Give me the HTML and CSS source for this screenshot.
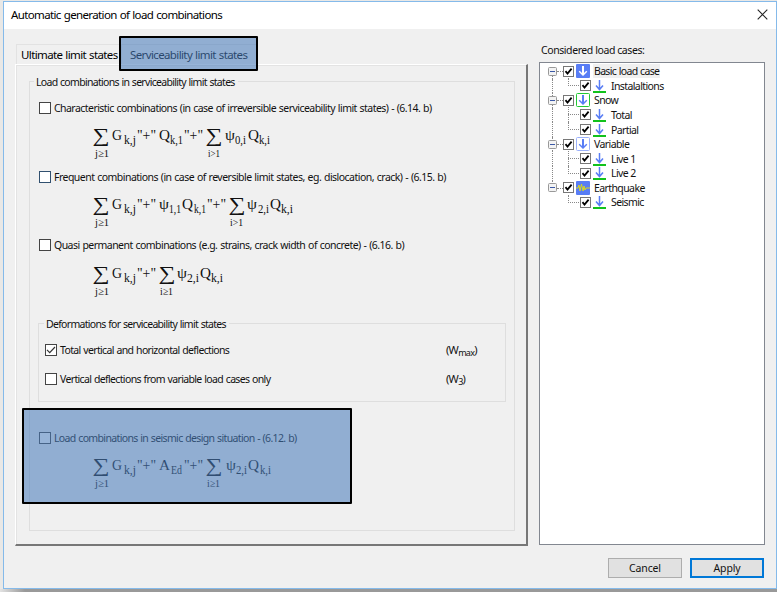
FILE: index.html
```html
<!DOCTYPE html>
<html lang="en">
<head>
<meta charset="utf-8">
<title>Automatic generation of load combinations</title>
<link rel="stylesheet" href="styles.css">
</head>
<body>
<svg class="defs" width="0" height="0" aria-hidden="true">
  <symbol id="check" viewBox="0 0 11 11"><rect x=".5" y=".5" width="10" height="10" fill="#fff" stroke="#777"/><path d="M2.5 5.2 4.5 7.6 8.6 2.7" fill="none" stroke="#000" stroke-width="1.8"/></symbol>
  <symbol id="minus" viewBox="0 0 9 9"><rect x=".5" y=".5" width="8" height="8" rx="1" fill="#f3f3f3" stroke="#999"/><path d="M2 4.5h5" stroke="#3c59a6"/></symbol>
  <symbol id="load" viewBox="0 0 13 14"><path d="M6.5 1v9M3 6.5l3.5 4 3.5-4" fill="none" stroke="#587df5" stroke-width="1.5"/><path d="M0 13h13" stroke="#12c21c" stroke-width="2"/></symbol>
  <symbol id="arrow" viewBox="0 0 14 14"><path d="M6 2h2v7l2.300-2.300 1 1L7 12 2.700 7.700l1-1L6 9z"/></symbol>
</svg>
<main class="window">
  <header class="titlebar"><span class="title">Automatic generation of load combinations</span>
    <svg class="close" width="11" height="11" viewBox="0 0 11 11"><path d="M.7.7l9.6 9.6M10.3.7.7 10.3" stroke="#222" stroke-width="1.1"/></svg>
  </header>
  <div class="content">
    <section class="left">
      <nav class="tabs">
        <span class="tab tab-ultimate">Ultimate limit states</span>
        <span class="tab tab-service">Serviceability limit states<i class="highlight tab-highlight"></i></span>
      </nav>
      <div class="panel">
        <div class="group main-group">
          <span class="legend legend-main">Load combinations in serviceability limit states</span>
          <div class="combination first">
            <label class="option"><i class="box"></i><span class="t1">Characteristic combinations (in case of irreversible serviceability limit states) - (6.14. b)</span></label>
            <svg class="formula" data-formula="characteristic" width="220" height="36"></svg>
          </div>
          <div class="combination second">
            <label class="option"><i class="box blue"></i><span class="t2">Frequent combinations (in case of reversible limit states, eg. dislocation, crack) - (6.15. b)</span></label>
            <svg class="formula" data-formula="frequent" width="220" height="36"></svg>
          </div>
          <div class="combination third">
            <label class="option"><i class="box"></i><span class="t3">Quasi permanent combinations (e.g. strains, crack width of concrete) - (6.16. b)</span></label>
            <svg class="formula" data-formula="quasi" width="220" height="36"></svg>
          </div>
          <div class="group inner-group">
            <span class="legend legend-inner">Deformations for serviceability limit states</span>
            <div class="deflection"><label class="option"><i class="box"><svg width="10" height="10"><path d="M1 4.800 3.700 7.600 9 2" fill="none" stroke="#333" stroke-width="1.2"/></svg></i><span class="t4">Total vertical and horizontal deflections</span></label><span class="symbol wmax">(W<sub>max</sub>)</span></div>
            <div class="deflection"><label class="option"><i class="box"></i><span class="t4">Vertical deflections from variable load cases only</span></label><span class="symbol">(W<sub>3</sub>)</span></div>
          </div>
          <div class="combination seismic">
            <label class="option"><i class="box"></i><span class="t4">Load combinations in seismic design situation - (6.12. b)</span></label>
            <svg class="formula" data-formula="seismic" width="220" height="36"></svg>
            <i class="highlight seismic-highlight"></i>
          </div>
        </div>
      </div>
    </section>
    <aside class="right">
      <span class="heading">Considered load cases:</span>
      <div class="tree">
        <div class="row parent top"><svg class="expand"><use href="#minus"/></svg><svg class="check"><use href="#check"/></svg><svg class="kind"><rect width="14" height="14" rx="1" fill="#587df5"/><use href="#arrow" fill="#fff"/></svg><span class="label selected">Basic load case</span></div>
        <div class="row child last"><i class="branch"></i><svg class="check"><use href="#check"/></svg><svg class="load"><use href="#load"/></svg><span class="label">Instalaltions</span></div>
        <div class="row parent"><svg class="expand"><use href="#minus"/></svg><svg class="check"><use href="#check"/></svg><svg class="kind"><rect x=".5" y=".5" width="13" height="13" rx="1" fill="#fff" stroke="#23c934"/><use href="#arrow" fill="#587df5"/></svg><span class="label">Snow</span></div>
        <div class="row child"><i class="branch"></i><svg class="check"><use href="#check"/></svg><svg class="load"><use href="#load"/></svg><span class="label">Total</span></div>
        <div class="row child last"><i class="branch"></i><svg class="check"><use href="#check"/></svg><svg class="load"><use href="#load"/></svg><span class="label">Partial</span></div>
        <div class="row parent"><svg class="expand"><use href="#minus"/></svg><svg class="check"><use href="#check"/></svg><svg class="kind"><rect x=".5" y=".5" width="13" height="13" rx="1" fill="#fff" stroke="#9bb1fa"/><use href="#arrow" fill="#587df5"/></svg><span class="label">Variable</span></div>
        <div class="row child"><i class="branch"></i><svg class="check"><use href="#check"/></svg><svg class="load"><use href="#load"/></svg><span class="label">Live 1</span></div>
        <div class="row child last"><i class="branch"></i><svg class="check"><use href="#check"/></svg><svg class="load"><use href="#load"/></svg><span class="label">Live 2</span></div>
        <div class="row parent bottom"><svg class="expand"><use href="#minus"/></svg><svg class="check"><use href="#check"/></svg><svg class="kind"><rect width="14" height="14" rx="1" fill="#587df5"/><path d="M0 7h2l1-3 1 6 1.500-7L7 10l1-5 1 4 1-2h4" fill="none" stroke="#d9d820"/></svg><span class="label">Earthquake</span></div>
        <div class="row child last end"><i class="branch"></i><svg class="check"><use href="#check"/></svg><svg class="load"><use href="#load"/></svg><span class="label">Seismic</span></div>
      </div>
      <div class="actions"><button class="cancel">Cancel</button><button class="apply">Apply</button></div>
    </aside>
  </div>
</main>
<script src="formulas.js"></script>
</body>
</html>
```
FILE: formulas.js
```js
// Each term: [style, x, width, text]
const lead = [["sum", 2.5, 17, "∑"], ["lim", 5, 14, "j≥1"], ["sym", 22, 10, "G"], ["sub", 34, 12, "k,j"], ["sym", 47, 19, '"+"']];
const formulas = {
  characteristic: [...lead,
    ["sym", 69, 11, "Q"], ["sub", 80, 13, "k,1"], ["sym", 94, 19, '"+"'],
    ["sum", 115.5, 17, "∑"], ["lim", 118, 12, "i>1"],
    ["sym", 135, 10, "ψ"], ["sub", 145, 11, "0,i"], ["sym", 158, 11, "Q"], ["sub", 169, 11, "k,i"]],
  frequent: [...lead,
    ["sym", 69, 10, "ψ"], ["sub", 79, 12, "1,1"], ["sym", 92, 11, "Q"], ["sub", 104, 12, "k,1"], ["sym", 117, 19, '"+"'],
    ["sum", 138.5, 17, "∑"], ["lim", 140, 13, "i>1"],
    ["sym", 157, 10, "ψ"], ["sub", 168, 11, "2,i"], ["sym", 180, 11, "Q"], ["sub", 191, 12, "k,i"]],
  quasi: [...lead,
    ["sum", 68.5, 17, "∑"], ["lim", 70, 13, "i≥1"],
    ["sym", 87, 10, "ψ"], ["sub", 97, 12, "2,i"], ["sym", 110, 11, "Q"], ["sub", 121, 12, "k,i"]],
  seismic: [...lead,
    ["sym", 69, 11, "A"], ["sub", 81, 11, "Ed"], ["sym", 94, 19, '"+"'],
    ["sum", 115.5, 17, "∑"], ["lim", 117, 13, "i≥1"],
    ["sym", 136, 10, "ψ"], ["sub", 146, 11, "2,i"], ["sym", 158, 11, "Q"], ["sub", 170, 11, "k,i"]]
};
const baseline = { sum: 16, lim: 31, sym: 14, sub: 18 };
document.querySelectorAll("[data-formula]").forEach(svg => {
  for (const [style, x, width, content] of formulas[svg.dataset.formula]) {
    const text = document.createElementNS("http://www.w3.org/2000/svg", "text");
    text.setAttribute("class", style);
    text.setAttribute("x", x);
    text.setAttribute("y", baseline[style]);
    text.setAttribute("textLength", width);
    text.setAttribute("lengthAdjust", "spacingAndGlyphs");
    text.textContent = content;
    svg.append(text);
  }
});
```
FILE: styles.css
```css
* { box-sizing: border-box; }
body { margin: 0; width: 777px; height: 592px; padding: 1px 0 3px 3px; overflow: hidden; background: linear-gradient(90deg, #e3e3e3 0, #999 25px) 0 100% / 100% 3px no-repeat #e9e8e6; font: 10.5px/14px "Noto Sans", "Open Sans", sans-serif; color: #111; }
.defs { position: absolute; }
.window { width: 774px; height: 588px; border: 1px solid #85baea; background: #f0f0f0; }
.titlebar { height: 27px; background: #fff; display: flex; justify-content: space-between; padding: 5px 8px 0 7px; font-size: 11.5px; line-height: 16px; color: #000; }
.title { letter-spacing: -.63px; word-spacing: .6px; }
.close { margin-top: 2px; }
.content { display: flex; height: 559px; }
span { white-space: nowrap; }
.left { width: 513px; margin-left: 11px; padding-top: 15px; }
.tabs { display: flex; height: 20px; padding-left: 1px; font-size: 11.5px; line-height: 18px; letter-spacing: -.62px; word-spacing: .6px; color: #000; }
.tab { border: 1px solid #e2e2e2; border-bottom: 0; height: 20px; }
.tab-ultimate { width: 105px; padding: 1px 0 0 4px; }
.tab-service { position: relative; width: 136px; padding: 1px 0 0 8px; }
.highlight { position: absolute; border: 2px solid #000; border-radius: 1px; background: rgba(72, 123, 187, .57); }
.tab-highlight { left: -3px; top: -9px; width: 139px; height: 35px; }
.panel { width: 513px; height: 482px; border: 1px solid #fff; border-right: 2px solid #777; border-bottom: 2px solid #777; box-shadow: inset 1px 1px #e3e3e3; padding: 16px 0 0 13px; }
.group { display: flex; flex-direction: column; border: 1px solid #dedede; }
.legend { background: #f0f0f0; align-self: flex-start; padding: 0 3px 0 2px; margin-top: -7px; height: 14px; letter-spacing: -.7px; word-spacing: .6px; }
.main-group { width: 486px; height: 450px; }
.legend-main { margin-left: 4px; }
.combination { position: relative; padding-left: 9px; }
.first { margin-top: 12px; height: 69px; }
.second { height: 68px; }
.third { height: 85px; }
.option { display: flex; align-items: center; height: 13px; }
.option span { letter-spacing: -.65px; word-spacing: .6px; }
.option .t1 { letter-spacing: -.55px; }
.option .t2 { letter-spacing: -.53px; }
.option .t3 { letter-spacing: -.54px; }
.box { width: 12px; height: 12px; flex: none; border: 1px solid #444; background: #fff; margin-right: 3px; display: block; }
.box svg { display: block; }
.blue { border-color: #31506f; }
.formula { display: block; margin: 12px 0 0 51px; fill: #111; overflow: visible; }
.third .formula { margin-top: 13px; }
.sum { font: 20px "Liberation Serif", serif; }
.sym { font: 14px "Liberation Serif", serif; }
.sub, .lim { font: 12px "Liberation Serif", serif; }
.lim { font-size: 11px; }
.inner-group { width: 468px; height: 79px; margin-left: 8px; }
.legend-inner { margin-left: 5px; }
.deflection { display: flex; margin: 12px 0 0 6px; height: 15px; }
.deflection + .deflection { margin-top: 14px; }
.deflection .option { width: 396px; }
.symbol { margin-left: 5px; font-size: 11px; line-height: 13px; letter-spacing: -.7px; }
sub { font-size: 9px; line-height: 0; vertical-align: -2px; }
.seismic { margin-top: 29px; height: 70px; }
.seismic-highlight { left: -8px; top: -23px; width: 330px; height: 96px; }
.right { width: 226px; margin-left: 11px; padding-top: 14px; display: flex; flex-direction: column; }
.heading { height: 19px; padding-left: 2px; letter-spacing: -.42px; }
.tree { width: 226px; height: 483px; border: 1px solid #828790; background: #fff; padding: 1px 0 0 8px; }
.row { display: flex; align-items: center; height: 14.57px; position: relative; }
.row svg { flex: none; display: block; }
.expand { width: 9px; height: 9px; position: relative; }
.parent .check { margin-left: 6px; }
.check { width: 11px; height: 11px; position: relative; }
.kind { width: 14px; height: 14px; margin-left: 2px; }
.label { margin-left: 3px; padding: 0 1px; height: 14px; line-height: 14px; letter-spacing: -.6px; }
.selected { background: #f0f0f0; letter-spacing: -.68px; word-spacing: .6px; }
.row::before { content: ""; position: absolute; left: 4px; top: 0; bottom: 0; border-left: 1px dotted #888; }
.top::before { top: 7px; }
.bottom::before { bottom: 7px; }
.end::before { display: none; }
.parent::after { content: ""; position: absolute; left: 9px; top: 7px; width: 6px; border-top: 1px dotted #888; }
.branch { width: 13px; height: 15px; margin-left: 20px; position: relative; }
.branch::before { content: ""; position: absolute; left: 0; top: 0; height: 15px; border-left: 1px dotted #888; }
.last .branch::before { height: 8px; }
.branch::after { content: ""; position: absolute; left: 0; top: 7px; width: 11px; border-top: 1px dotted #888; }
.child .check { margin-left: -1px; }
.load { width: 13px; height: 14px; margin-left: 2px; }
.child .label { margin-left: 4px; }
.actions { display: flex; gap: 8px; margin: 13px 0 0 69px; }
button { width: 74px; height: 20px; flex: none; padding: 0; border: 1px solid #adadad; background: #e1e1e1; color: #111; font: 10.5px/16px "Noto Sans", sans-serif; letter-spacing: -.15px; }
.apply { border: 2px solid #0078d7; }
```
